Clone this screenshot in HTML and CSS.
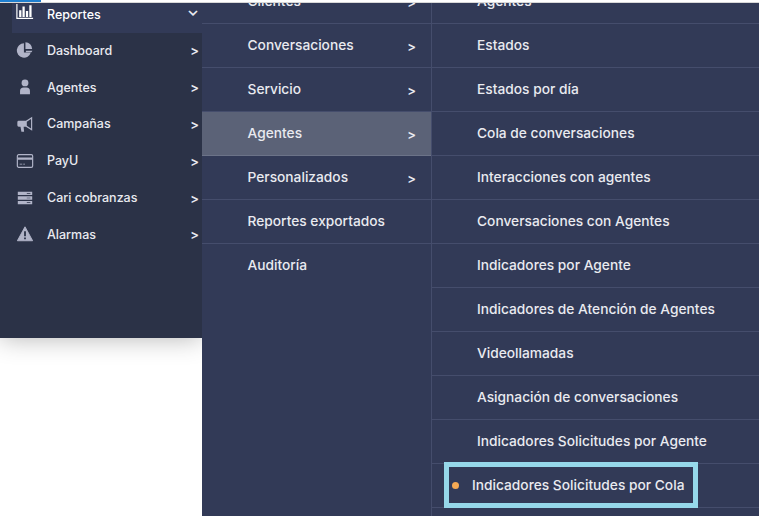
FILE: index.html
```html
<!DOCTYPE html>
<html lang="es">
<head>
<meta charset="utf-8">
<title>Reportes</title>
<link rel="stylesheet" href="styles.css">
</head>
<body>
<div class="topline"><span class="topline-blue"></span></div>
<div class="stage">
  <nav class="side">
    <div class="side-item active">
      <svg class="ico ico-report" viewBox="0 0 20 20"><path d="M1 1v16h18" fill="none" stroke="#fff" stroke-width="1.300"/><path d="M3.500 8h2.500v7.500H3.500zM7.200 4h2.500v11.500H7.200zM11 9h2.500v6.500H11zM14.800 2.500h2.500v13h-2.500z" fill="#fff"/></svg>
      <span class="side-label">Reportes</span><span class="chev down">&#8964;</span>
    </div>
    <div class="side-item">
      <svg class="ico" viewBox="0 0 20 20"><path d="M8.800 2.500a8 8 0 1 0 7.700 10.400H8.800z" fill="#b1b4c8"/><path d="M10.500 1.500a7.500 7.500 0 0 1 7.500 7.500h-7.500zM11 10.700h7.200a7 7 0 0 1-1 1.800H11z" fill="#b1b4c8"/></svg>
      <span class="side-label">Dashboard</span><span class="chev">&gt;</span>
    </div>
    <div class="side-item">
      <svg class="ico" viewBox="0 0 20 20"><circle cx="10" cy="5.500" r="3.800" fill="#b1b4c8"/><path d="M4.500 18v-3.500a4 4 0 0 1 4-4h3a4 4 0 0 1 4 4V18z" fill="#b1b4c8"/></svg>
      <span class="side-label">Agentes</span><span class="chev">&gt;</span>
    </div>
    <div class="side-item">
      <svg class="ico" viewBox="0 0 20 20"><path d="M18 2 11 6.500H3a1.500 1.500 0 0 0-1.500 1.500v3.500A1.500 1.500 0 0 0 3 13h2l1 5.500h3L8.500 13H11l7 4.500zM16.700 4.500v10.500L12 12V7.500z" fill="#b1b4c8" fill-rule="evenodd"/></svg>
      <span class="side-label">Campañas</span><span class="chev">&gt;</span>
    </div>
    <div class="side-item">
      <svg class="ico" viewBox="0 0 20 20"><rect x="1.500" y="3" width="17" height="14" rx="1.500" fill="none" stroke="#b1b4c8" stroke-width="1.300"/><path d="M2 6h16v2.500H2zM4 13h3v1H4zM8 13h2v1H8z" fill="#b1b4c8"/></svg>
      <span class="side-label">PayU</span><span class="chev">&gt;</span>
    </div>
    <div class="side-item">
      <svg class="ico" viewBox="0 0 20 20"><path d="M2 3h16v3.800H2zM2 8.100h16v3.800H2zM2 13.200h16V17H2z" fill="#b1b4c8"/><path d="M12 4.500h4v.8h-4zM12 9.600h4v.8h-4zM12 14.700h4v.8h-4z" fill="#2b3247"/></svg>
      <span class="side-label">Cari cobranzas</span><span class="chev">&gt;</span>
    </div>
    <div class="side-item">
      <svg class="ico" viewBox="0 0 20 20"><path d="M10 2 18.500 17.500h-17z" fill="#b1b4c8" stroke="#b1b4c8" stroke-linejoin="round"/><path d="M9 7h2v5.500H9zM9 13.800h2v2H9z" fill="#2b3247"/></svg>
      <span class="side-label">Alarmas</span><span class="chev">&gt;</span>
    </div>
  </nav>
  <div class="col col-mid">
    <div class="row"><span class="row-label">Clientes</span><span class="chev">&gt;</span></div>
    <div class="row"><span class="row-label">Conversaciones</span><span class="chev">&gt;</span></div>
    <div class="row"><span class="row-label">Servicio</span><span class="chev">&gt;</span></div>
    <div class="row current"><span class="row-label">Agentes</span><span class="chev">&gt;</span></div>
    <div class="row"><span class="row-label">Personalizados</span><span class="chev">&gt;</span></div>
    <div class="row"><span class="row-label">Reportes exportados</span></div>
    <div class="row plain"><span class="row-label">Auditoría</span></div>
  </div>
  <div class="col col-right">
    <div class="row"><span class="row-label">Agentes</span></div>
    <div class="row"><span class="row-label">Estados</span></div>
    <div class="row"><span class="row-label">Estados por día</span></div>
    <div class="row"><span class="row-label">Cola de conversaciones</span></div>
    <div class="row"><span class="row-label">Interacciones con agentes</span></div>
    <div class="row"><span class="row-label">Conversaciones con Agentes</span></div>
    <div class="row"><span class="row-label">Indicadores por Agente</span></div>
    <div class="row"><span class="row-label">Indicadores de Atención de Agentes</span></div>
    <div class="row"><span class="row-label">Videollamadas</span></div>
    <div class="row"><span class="row-label">Asignación de conversaciones</span></div>
    <div class="row"><span class="row-label">Indicadores Solicitudes por Agente</span></div>
    <div class="row selected"><span class="highlight"><span class="dot"></span><span class="row-label">Indicadores Solicitudes por Cola</span></span></div>
  </div>
</div>
</body>
</html>
```
FILE: styles.css
```css
* { box-sizing: border-box; }
html, body { margin: 0; height: 100%; overflow: hidden; background: #fff; }
body { font-family: Inter, "Liberation Sans", sans-serif; font-size: 13.75px; font-weight: 500; color: #e9eaf0; }
.topline { position: relative; z-index: 2; height: 3px; background: #fff; border-bottom: 1px solid #d8d8d8; }
.topline-blue { display: block; width: 41px; height: 2px; background: #1f7fd0; }
.stage { display: flex; margin-top: -23px; height: 536px; align-items: flex-start; }
.side { width: 202px; height: 358px; padding-top: 15.500px; background: #2b3247; box-shadow: 0 0 24px rgba(0,0,0,.3); flex: none; font-size: 12.500px; }
.side-item { display: flex; align-items: center; height: 36.800px; padding: 1px 3px 0 16px; }
.side-item.active { margin-left: 12px; padding: 0 3px 0 4px; background: #323a57; color: #fff; height: 37px; margin-bottom: -1px; }
.ico { width: 18px; height: 18px; flex: none; }
.ico-report { margin-top: -4px; }
.side-label { margin-left: 13px; flex: 1; }
.chev { font-size: 13px; color: #e9eaf0; font-weight: 600; }
.chev.down { font-size: 15px; line-height: 10px; margin-top: -6px; }
.col { background: #323a57; height: 536px; flex: none; }
.col-mid { width: 230px; border-right: 1px solid #454d6c; }
.col-right { flex: 1; min-width: 0; }
.row { display: flex; align-items: center; height: 44px; border-bottom: 1px solid #454d6c; padding: 0 15px 2px 45.500px; }
.col-right .row { padding-left: 45px; }
.row-label { flex: 1; white-space: nowrap; }
.col-mid .chev { margin-top: 3px; }
.row.current { background: #5b6277; border-bottom-color: #6c7388; }
.row.plain { border-bottom: 0; }
.col-right .row.selected { padding: 0 0 0 12px; }
.highlight { display: flex; align-items: center; width: 254px; height: 46px; border: 5px solid #96d8ea; padding-left: 3px; margin-top: -1px; }
.dot { width: 7px; height: 7px; border-radius: 50%; background: #f5a954; margin-right: 13px; }
```
